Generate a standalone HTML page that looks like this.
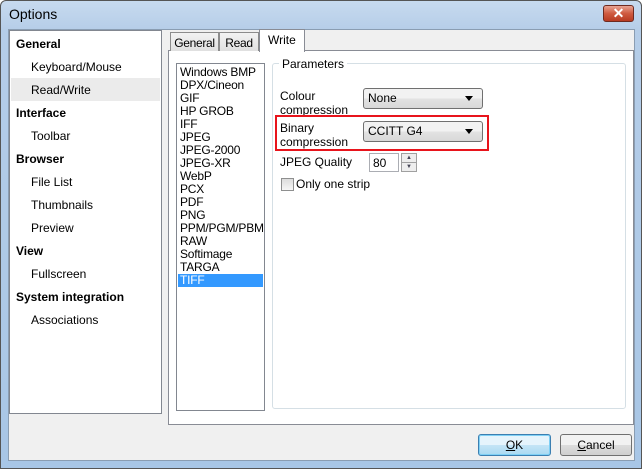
<!DOCTYPE html>
<html><head><style>
*{margin:0;padding:0;box-sizing:border-box}
body{width:642px;height:469px;overflow:hidden;background:#fff;font-family:"Liberation Sans",sans-serif;font-size:12px;color:#000;position:relative}
.a{position:absolute}
.frame{left:0;top:0;width:642px;height:469px;border:1px solid #555;border-radius:6px 6px 0 0;background:linear-gradient(#c7daef,#b5cde8 30px,#a8c6e6);}
.client{left:8px;top:29px;width:627px;height:432px;background:#f0f0f0;border:1px solid #8a9db2}
.box{background:#fff;border:1px solid #828790}
.nav{left:16px;font-size:12px}
.b{font-weight:bold}
.li{left:180px;font-size:12px;line-height:13px;letter-spacing:-0.2px}
.btn{border:1px solid #707070;border-radius:3px;background:linear-gradient(#f2f2f2 50%,#dddddd 50%,#cfcfcf);text-align:center;line-height:20px}
.combo{border:1px solid #707070;border-radius:3px;background:linear-gradient(#f2f2f2 50%,#e3e3e3 50%,#d8d8d8);padding-left:4px;line-height:19px}
.combo:after{content:"";position:absolute;right:9px;top:7px;border-left:4px solid transparent;border-right:4px solid transparent;border-top:5px solid #000}
.tab{top:32px;height:19px;border:1px solid #8c8c8c;border-bottom:none;background:linear-gradient(#f3f3f3,#e0e0e0);padding:3px 0 0;text-align:center;font-size:12px;letter-spacing:-0.3px}
</style></head><body>
<div class="a frame"></div>
<div class="a" style="left:9px;top:6px;font-size:14px">Options</div>
<div class="a" style="left:603px;top:5px;width:31px;height:17px;border:1px solid #6e2a20;border-radius:3px;background:linear-gradient(#e8a493,#cf5a40 50%,#b73b22);color:#fff;font-weight:bold;text-align:center;line-height:15px;font-size:14px">✕</div>
<div class="a client"></div>
<div class="a box" style="left:9px;top:30px;width:153px;height:384px"></div>
<div class="a" style="left:11px;top:78px;width:149px;height:23px;background:#ebebeb"></div>
<div class="a nav b" style="top:37px">General</div>
<div class="a nav" style="left:31px;top:60px">Keyboard/Mouse</div>
<div class="a nav" style="left:31px;top:83px">Read/Write</div>
<div class="a nav b" style="top:106px">Interface</div>
<div class="a nav" style="left:31px;top:129px">Toolbar</div>
<div class="a nav b" style="top:152px">Browser</div>
<div class="a nav" style="left:31px;top:175px">File List</div>
<div class="a nav" style="left:31px;top:198px">Thumbnails</div>
<div class="a nav" style="left:31px;top:221px">Preview</div>
<div class="a nav b" style="top:244px">View</div>
<div class="a nav" style="left:31px;top:267px">Fullscreen</div>
<div class="a nav b" style="top:290px">System integration</div>
<div class="a nav" style="left:31px;top:313px">Associations</div>

<div class="a" style="left:168px;top:50px;width:466px;height:375px;background:#fff;border:1px solid #898c95"></div>
<div class="a tab" style="left:170px;width:49px">General</div>
<div class="a tab" style="left:219px;width:40px">Read</div>
<div class="a" style="left:259px;top:29px;width:46px;height:23px;border:1px solid #898c95;border-bottom:none;background:#fff;padding:3px 0 0 8px">Write</div>

<div class="a box" style="left:176px;top:63px;width:89px;height:348px"></div>
<div class="a" style="left:178px;top:274px;width:85px;height:13px;background:#3399ff"></div>
<div class="a li" style="top:66px">Windows BMP<br>DPX/Cineon<br>GIF<br>HP GROB<br>IFF<br>JPEG<br>JPEG-2000<br>JPEG-XR<br>WebP<br>PCX<br>PDF<br>PNG<br>PPM/PGM/PBM<br>RAW<br>Softimage<br>TARGA<br><span style="color:#fff">TIFF</span></div>

<div class="a" style="left:272px;top:63px;width:354px;height:346px;border:1px solid #d5dfe5;border-radius:3px"></div>
<div class="a" style="left:279px;top:57px;background:#fff;padding:0 3px">Parameters</div>
<div class="a" style="left:280px;top:89px;line-height:14px">Colour<br>compression</div>
<div class="a combo" style="left:363px;top:88px;width:120px;height:21px">None</div>
<div class="a" style="left:275px;top:115px;width:214px;height:36px;border:2px solid #e8141c"></div>
<div class="a" style="left:280px;top:121px;line-height:14px">Binary<br>compression</div>
<div class="a combo" style="left:363px;top:121px;width:120px;height:21px">CCITT G4</div>
<div class="a" style="left:280px;top:155px">JPEG Quality</div>
<div class="a" style="left:369px;top:153px;width:30px;height:19px;border:1px solid #abadb3;background:#fff;padding:2px 0 0 3px">80</div>
<div class="a" style="left:401px;top:153px;width:16px;height:10px;border:1px solid #a0a0a0;background:#eee;font-size:6px;text-align:center;line-height:8px;color:#445">▲</div>
<div class="a" style="left:401px;top:162px;width:16px;height:10px;border:1px solid #a0a0a0;background:#eee;font-size:6px;text-align:center;line-height:8px;color:#445">▼</div>
<div class="a" style="left:281px;top:178px;width:13px;height:13px;border:1px solid #8e8f8f;background:linear-gradient(#dcdcdc,#f6f6f6)"></div>
<div class="a" style="left:296px;top:177px">Only one strip</div>

<div class="a btn" style="left:478px;top:434px;width:73px;height:22px;border-color:#3c7fb1;background:linear-gradient(#e5f4fc 50%,#c4e5f6 50%,#a9d9f2);box-shadow:inset 0 0 0 1px #7fd0f5"><u>O</u>K</div>
<div class="a btn" style="left:560px;top:434px;width:72px;height:22px"><u>C</u>ancel</div>
</body></html>
